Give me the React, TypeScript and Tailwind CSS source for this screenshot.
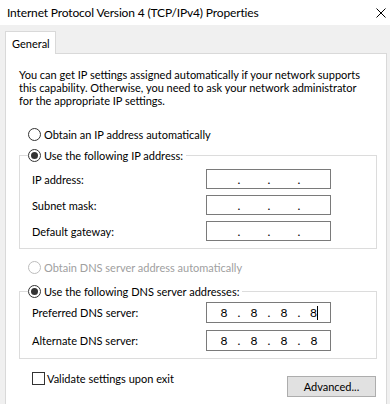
import React from "react";

function Radio({ checked = false, disabled = false }: { checked?: boolean; disabled?: boolean }) {
  const stroke = disabled ? "#bcbcbc" : "#333333";
  return (
    <svg width="13" height="13" viewBox="0 0 13 13" className="shrink-0">
      <circle cx="6.5" cy="6.5" r="6" fill="#ffffff" stroke={stroke} strokeWidth="1" />
      {checked && <circle cx="6.5" cy="6.5" r="3.5" fill="#333333" />}
    </svg>
  );
}

function IpBox({ values, caret = false, tall = false }: { values?: string[]; caret?: boolean; tall?: boolean }) {
  const v = values ?? ["", "", "", ""];
  return (
    <div
      className={`w-[125px] ${tall ? "h-[21px]" : "h-[20px]"} border border-[#7a7a7a] bg-white flex items-center pl-[4px] text-black text-[12px]`}
    >
      {v.map((d, i) => (
        <React.Fragment key={i}>
          <div className="w-[26px] flex justify-center items-center">
            <span>{d}</span>
            {caret && i === 3 && <span className="inline-block w-px h-[14px] bg-black" />}
          </div>
          {i < 3 && <div className="w-[4px] flex justify-center">.</div>}
        </React.Fragment>
      ))}
    </div>
  );
}

function Row({ label, children, tall = false }: { label: string; children: React.ReactNode; tall?: boolean }) {
  return (
    <div className={`flex items-center ${tall ? "h-[21px]" : "h-[20px]"} pl-[12px]`}>
      <div className="w-[174px]">{label}</div>
      {children}
    </div>
  );
}

export default function App() {
  return (
    <div className="w-[390px] h-[404px] overflow-hidden bg-[#f0f0f0] flex flex-col font-['Lato',sans-serif] text-[11px] leading-[13px] text-black">
      {/* Title bar */}
      <div className="h-[25px] shrink-0 bg-white flex items-center justify-between pl-[7px] pr-[4px]">
        <span className="text-[12px] tracking-[-0.15px]">Internet Protocol Version 4 (TCP/IPv4) Properties</span>
        <svg width="10" height="10" viewBox="0 0 10 10">
          <path d="M0.5 0.5 L9.5 9.5 M9.5 0.5 L0.5 9.5" stroke="#000" strokeWidth="1" fill="none" />
        </svg>
      </div>

      {/* Tab strip */}
      <div className="mt-[6px] ml-[5px] shrink-0">
        <div className="relative z-10 -mb-px w-[51px] h-[23px] border border-b-0 border-[#d9d9d9] bg-white flex items-center pl-[6px]">
          General
        </div>
      </div>

      {/* Panel */}
      <div className="ml-[5px] w-[382px] h-[400px] shrink-0 border border-[#d9d9d9] bg-white">
        <p className="pt-[14px] pl-[13px] whitespace-nowrap">
          You can get IP settings assigned automatically if your network supports
          <br />
          this capability. Otherwise, you need to ask your network administrator
          <br />
          for the appropriate IP settings.
        </p>

        <div className="mt-[20px] ml-[22px] h-[14px] flex items-center gap-[3px]">
          <Radio />
          <span>Obtain an IP address automatically</span>
        </div>

        <fieldset className="mt-[7px] ml-[13px] w-[358px] border border-[#dcdcdc] pb-[7px]">
          <legend className="ml-[8px] pr-[3px] h-[14px] flex items-center gap-[3px]">
            <Radio checked />
            <span>Use the following IP address:</span>
          </legend>
          <div className="mt-[7px] flex flex-col gap-[6px]">
            <Row label="IP address:">
              <IpBox />
            </Row>
            <Row label="Subnet mask:">
              <IpBox />
            </Row>
            <Row label="Default gateway:">
              <IpBox />
            </Row>
          </div>
        </fieldset>

        <div className="mt-[11px] ml-[22px] h-[14px] flex items-center gap-[3px] text-[#a0a0a0]">
          <Radio disabled />
          <span>Obtain DNS server address automatically</span>
        </div>

        <fieldset className="mt-[10px] ml-[13px] w-[358px] border border-[#dcdcdc] pb-[7px]">
          <legend className="ml-[8px] pr-[3px] h-[14px] flex items-center gap-[3px]">
            <Radio checked />
            <span>Use the following DNS server addresses:</span>
          </legend>
          <div className="mt-[4px] flex flex-col gap-[7px]">
            <Row label="Preferred DNS server:" tall>
              <IpBox values={["8", "8", "8", "8"]} caret tall />
            </Row>
            <Row label="Alternate DNS server:" tall>
              <IpBox values={["8", "8", "8", "8"]} tall />
            </Row>
          </div>
        </fieldset>

        <div className="mt-[13px] flex items-start justify-between pl-[26px] pr-[10px]">
          <div className="flex items-center gap-[2px] h-[13px]">
            <div className="w-[13px] h-[13px] border border-[#333333] bg-white shrink-0" />
            <span>Validate settings upon exit</span>
          </div>
          <button className="mt-[4px] w-[89px] h-[21px] border border-[#adadad] bg-[#e1e1e1] flex items-center justify-center">
            Advanced...
          </button>
        </div>
      </div>
    </div>
  );
}
